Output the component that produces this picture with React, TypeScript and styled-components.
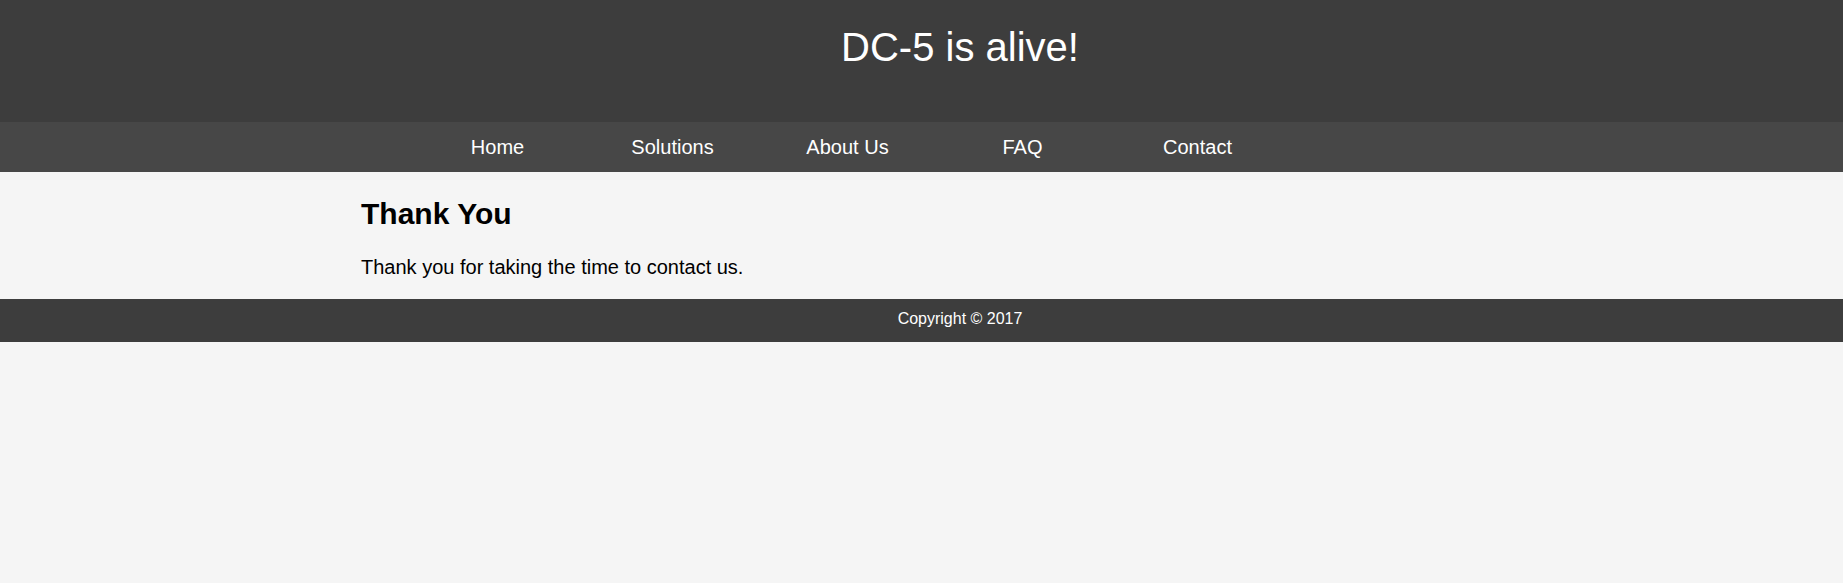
import React from "react";
import styled, { createGlobalStyle } from "styled-components";

const GlobalStyle = createGlobalStyle`
  html, body {
    margin: 0;
    padding: 0;
    background: #f5f5f5;
    font-family: "Liberation Sans", Arial, Helvetica, sans-serif;
  }
`;

const Header = styled.header`
  background: #3d3d3d;
  height: 122px;
  box-sizing: border-box;
  padding: 24px 0 0 77px;
`;

const SiteTitle = styled.h1`
  margin: 0;
  color: #ffffff;
  font-size: 40px;
  font-weight: normal;
  line-height: 46px;
  text-align: center;
`;

const Nav = styled.nav`
  background: #474747;
  height: 50px;
`;

const NavList = styled.ul`
  list-style: none;
  margin: 0;
  padding: 0 0 0 410px;
  display: flex;
  height: 100%;
  align-items: center;
`;

const NavItem = styled.li`
  width: 175px;
  text-align: center;
  font-size: 20px;
  line-height: 23px;
`;

const NavLink = styled.a`
  color: #ffffff;
  text-decoration: none;
`;

const Main = styled.main`
  padding: 0 0 0 361px;
  overflow: hidden;
`;

const Heading = styled.h2`
  margin: 25px 0 25px;
  font-size: 30px;
  font-weight: bold;
  line-height: 34px;
  color: #000000;
`;

const Paragraph = styled.p`
  margin: 0 0 20px;
  font-size: 20px;
  line-height: 23px;
  color: #000000;
`;

const Footer = styled.footer`
  background: #3d3d3d;
  height: 43px;
  box-sizing: border-box;
  padding: 11px 0 0 77px;
  text-align: center;
  color: #ffffff;
  font-size: 16px;
  line-height: 18px;
`;

const links = ["Home", "Solutions", "About Us", "FAQ", "Contact"];

export default function App() {
  return (
    <>
      <GlobalStyle />
      <Header>
        <SiteTitle>DC-5 is alive!</SiteTitle>
      </Header>
      <Nav>
        <NavList>
          {links.map((l) => (
            <NavItem key={l}>
              <NavLink href="#">{l}</NavLink>
            </NavItem>
          ))}
        </NavList>
      </Nav>
      <Main>
        <Heading>Thank You</Heading>
        <Paragraph>Thank you for taking the time to contact us.</Paragraph>
      </Main>
      <Footer>Copyright © 2017</Footer>
    </>
  );
}
